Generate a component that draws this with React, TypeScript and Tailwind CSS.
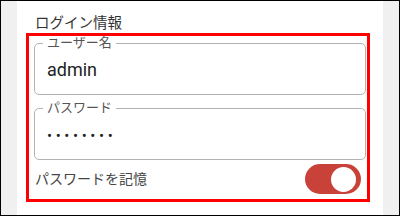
import { useState } from 'react';

const font = { fontFamily: 'Roboto, "Noto Sans CJK JP", sans-serif' };

function Field({ label, children }: { label: string; children: React.ReactNode }) {
  return (
    <fieldset className="w-[332px] rounded-[5px] border border-[#b3b3b3] pl-[8px]">
      <legend className="px-[4px] text-[13px] leading-[14px] text-[#555]">{label}</legend>
      <div className="h-[44px] pb-[5px] pl-[4px] flex items-center">{children}</div>
    </fieldset>
  );
}

export default function App() {
  const [remember, setRemember] = useState(true);

  return (
    <div className="w-[400px] h-[216px] border border-black bg-[#f0f0f0] px-[16px] flex" style={font}>
      <div className="w-[366px] h-full bg-white pt-[14px]">
        <h3 className="pl-[18px] text-[14.5px] leading-[18px] text-[#333]">ログイン情報</h3>
        <div className="ml-[9px] w-[344px] h-[169px] border-[3px] border-[#ff0000] pl-[5px] pr-[1px]">
          <Field label="ユーザー名">
            <span className="text-[18px] text-[#222]">admin</span>
          </Field>
          <div className="mt-[6px]">
            <Field label="パスワード">
              <span className="mt-[3px] text-[15px] tracking-[3.6px] text-[#222]">••••••••</span>
            </Field>
          </div>
          <div className="mt-[4px] flex items-center justify-between pl-[1px] pr-[5px]">
            <span className="text-[14px] text-[#444]">パスワードを記憶</span>
            <button
              onClick={() => setRemember(!remember)}
              className={
                'w-[56px] h-[30px] rounded-full flex items-center px-[3px] ' +
                (remember ? 'bg-[#c9423a] justify-end' : 'bg-[#ccc] justify-start')
              }
            >
              <span className="w-[25px] h-[25px] rounded-full bg-white mr-[2px]" />
            </button>
          </div>
        </div>
      </div>
    </div>
  );
}
